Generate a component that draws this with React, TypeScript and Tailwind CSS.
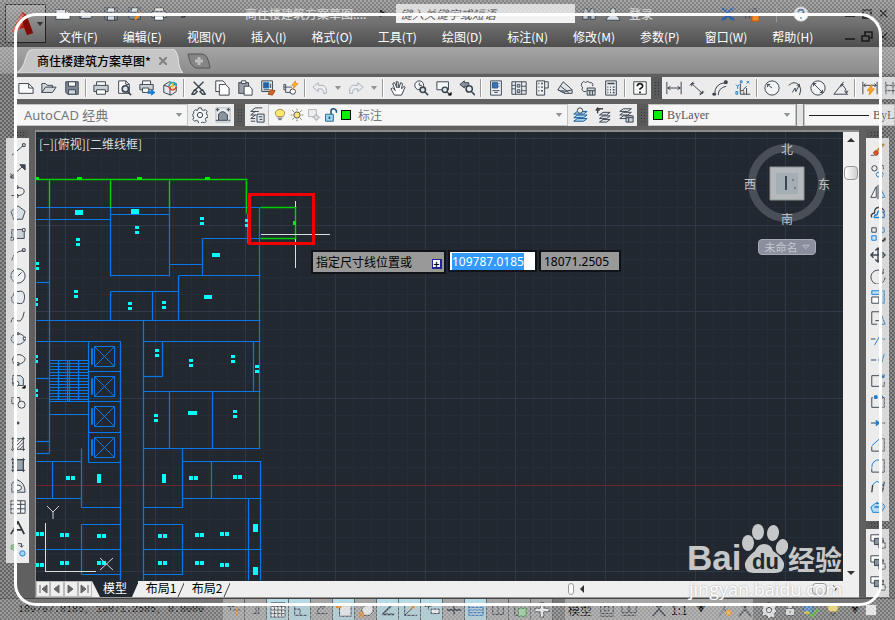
import { useEffect, useRef } from 'react';
import type { ReactNode } from 'react';

type Shape = { d: string; stroke?: string; fill?: string; width?: number };

const INK = '#3d4650';
const BLUE = '#1f7fd0';
const PALE = '#a9aeb4';
const ORANGE = '#f08a1c';

const icons: Record<string, Shape[]> = {
  newFile: [{ d: 'M1 4h11l5 5v6H1z', fill: '#fafbfc' }, { d: 'M12 4v5h5' }],
  open: [{ d: 'M1 14V4h4l2 2h6v3M1 14l4-6h12l-4 6z', fill: '#d4d8dc' }],
  save: [{ d: 'M2 2h14v14H4l-2-2z', fill: '#7b8896' }, { d: 'M5 2h8v5H5z', fill: '#f5f7f9' }, { d: 'M5 11h8v5H5z', fill: '#cfd6dc' }],
  saveAs: [{ d: 'M2 2h13v13H4l-2-2z', fill: '#7b8896' }, { d: 'M5 2h7v5H5z', fill: '#f5f7f9' }, { d: 'M9 15l7-8', stroke: ORANGE, width: 3 }],
  print: [{ d: 'M4 6V2h10v4', fill: '#fff' }, { d: 'M1 6h16v7H1z', fill: '#c9cfd5' }, { d: 'M4 11h10v5H4z', fill: '#fff' }],
  preview: [{ d: 'M3 1h8l4 4v10H3z', fill: '#fff' }, { d: 'M11 1v4h4' }, { d: 'M14 10a3.500 3.500 0 1 1-7 0a3.500 3.500 0 1 1 7 0M13 13l4 4', fill: '#dbe5ee', width: 1.8 }],
  publish: [{ d: 'M4 5V1h9v4', fill: '#fff' }, { d: 'M1 5h15v6H1z', fill: '#c9cfd5' }, { d: 'M4 9h7v5H4z', fill: '#fff' }, { d: 'M10 13h4v-2l4 3-4 3v-2h-4z', stroke: BLUE, fill: BLUE }],
  dwf: [{ d: 'M2 6l6-4 8 2v9l-6 4-8-3z', fill: '#e6eaee' }, { d: 'M2 6l7 2v9M9 8l7-4' }, { d: 'M16 7a4 4 0 1 1-8 0', stroke: '#e5402d', width: 2 }, { d: 'M8 7a4 4 0 0 1 8 0', stroke: '#19a6d8', width: 2 }, { d: 'M12 3v8M8 7h8', stroke: '#f4c73c' }],
  cut: [{ d: 'M3 2l10 10M14 2L4 12M1 16l3-5 3 2-3 3zM16 16l-3-5-3 2 3 3z', width: 1.6 }],
  copy: [{ d: 'M2 1h8l3 3v9H2z', fill: '#fff' }, { d: 'M6 5h7l4 4v8H6z', fill: '#fff' }],
  paste: [{ d: 'M2 3h11v12H2z', fill: '#9aa1a8' }, { d: 'M5 1h5v3H5z', fill: '#fff' }, { d: 'M8 7h6l3 3v7H8z', fill: '#fff' }],
  match: [{ d: 'M2 1h12v12H2z', fill: '#eef2f6' }, { d: 'M4 3h6v6H4z', stroke: BLUE, fill: '#2d5f97' }, { d: 'M4 11h7M12 4v5' }, { d: 'M9 16l3-5 5 1-3 5z', stroke: '#a8501a', fill: '#c9682a' }],
  blockEdit: [{ d: 'M1 8h9M1 5v6h2V5zM3 11v3h7', width: 1 }, { d: 'M14 13a3 3 0 1 1-6 0a3 3 0 1 1 6 0', fill: '#fff' }, { d: 'M14 1l-4 5h3l-2 4 6-6h-3z', stroke: ORANGE, fill: '#ffc13a' }],
  undo: [{ d: 'M1 8l6-5v3h5q5 1 4 9h-3q0-5-3-5H7v3z', stroke: PALE, fill: '#eceef0' }],
  redo: [{ d: 'M17 8l-6-5v3H6q-5 1-4 9h3q0-5 3-5h3v3z', stroke: PALE, fill: '#eceef0' }],
  hand: [{ d: 'M5 17l-4-7 2-1 3 3-3-8 2-1 3 6-1-7h2l1 7 2-6 2 1-1 6 3-3 1 1-4 9z', fill: '#fff' }],
  zoomTime: [{ d: 'M12 6a5 5 0 1 1-10 0a5 5 0 1 1 10 0M7 3v3h3', fill: '#f4f7fa' }, { d: 'M14 11a3 3 0 1 1-6 0a3 3 0 1 1 6 0M13 13l4 4', fill: '#dce6ee', width: 1.8 }],
  zoomWin: [{ d: 'M1 2h13v9H1z', fill: '#f4f7fa' }, { d: 'M13 11a3 3 0 1 1-6 0a3 3 0 1 1 6 0M12 13l3 3', fill: '#dce6ee', width: 1.6 }, { d: 'M17 14v3h-3z', stroke: '#111', fill: '#111' }],
  zoomPrev: [{ d: 'M1 5l5-4v2h5v4H6v2z', fill: '#8a949e' }, { d: 'M15 10a3.500 3.500 0 1 1-7 0a3.500 3.500 0 1 1 7 0M14 13l4 4', fill: '#e6edf3', width: 1.8 }],
  props: [{ d: 'M3 1h12v16H3z', fill: '#f4f7fa' }, { d: 'M5 3h6v6H5z', stroke: '#285b94', fill: '#3973b1' }, { d: 'M5 12h8M12 4h1M12 7h1M7 14h4' }],
  design: [{ d: 'M1 2h16v14H1z', fill: '#e9edf1' }, { d: 'M5 2v14M1 6h4M1 10h4M12 2v14M12 7h5M12 12h5M7 5h3v3H7zM7 11h3v3H7z', fill: '#bcc5cd', width: 1 }],
  palettes: [{ d: 'M3 1h9v16H3z', fill: '#eef1f4' }, { d: 'M12 2h4v7h-4' }, { d: 'M5 4h1M5 8h1M5 12h1M8 4h2M8 8h2M8 12h2', width: 1.6 }],
  sheets: [{ d: 'M1 11L7 2l10 9v4H9z', fill: '#dfe4e8' }, { d: 'M1 11l8 4M4 7l9 7M5 12q5 2 12-1', fill: '#aeb8c1' }],
  markup: [{ d: 'M2 4q2-4 4-1q3-3 5 0q5 0 3 4M2 4q-2 3 1 4q-2 3 1 5h3', fill: '#eef1f4' }, { d: 'M8 9h9v8H8zM8 12h9M11 12v5M14 12v5', fill: '#cfd7de' }],
  calc: [{ d: 'M3 1h12v16H3z', fill: '#e9edf0' }, { d: 'M5 4h8M5 8h1M8 8h1M11 8h2M5 11h1M8 11h1M11 11h2M5 14h1M8 14h1M11 14h2', width: 1.6 }],
  help: [{ d: 'M2 2h14v14H2z', fill: '#fff' }, { d: 'M6 7q0-3 3-3t3 3q0 1-3 3v1M9 13v2', stroke: '#222', width: 2 }],
  dimLinear: [{ d: 'M1 2v14M17 2v14M2 9h14M5 7L2 9l3 2M13 7l3 2-3 2' }],
  dimAligned: [{ d: 'M1 6l4-4M12 17l5-4M3 4l12 11M3 7V4h3M12 15h3v-3' }],
  dimArc: [{ d: 'M3 16Q3 4 15 3M7 17Q7 9 16 7' }, { d: 'M1 15h3v2H1zM14 1h3v3h-3z', fill: INK }],
  dimOrd: [{ d: 'M6 4v12h11M6 12h4M10 16v-3M9 11l4-4M13 9v7' }, { d: 'M1 5l2 2 2-2M3 7v3M13 1l3 3M16 1l-3 3M6 1h2v2H6zM1 13h2v3H1z', stroke: BLUE }],
  dimRad: [{ d: 'M17 9a8 8 0 1 1-16 0a8 8 0 1 1 16 0', fill: '#f3f5f7' }, { d: 'M9 9L4 5M4 8V5h3' }],
  dimJog: [{ d: 'M2 6q6-6 12 0q3 5 0 11M6 14l3-5 1 4 4-8M11 6l3-1v3' }],
  dimDia: [{ d: 'M17 9a8 8 0 1 1-16 0a8 8 0 1 1 16 0', fill: '#f3f5f7' }, { d: 'M4 4l10 10M4 7V4h3M11 14h3v-3' }],
  dimAng: [{ d: 'M1 16h16M1 16L12 2M9 5q6 3 6 10M9 8V5h3M13 12l2 3 2-3' }],
  dimQuick: [{ d: 'M1 2v14M17 2v14M2 6h14M4 4L2 6l2 2M14 4l2 2-2 2' }, { d: 'M11 5l-5 7h3l-1 5 6-7h-3z', stroke: ORANGE, fill: '#ffa629' }],
  dimBase: [{ d: 'M1 2v14M9 2v14M17 2v14M1 6h16M1 12h16' }],
  gear: [{ d: 'M7.500 1h3l.5 2 2 1 2-1 2 2-1 2 1 2 1 .5v2l-2 .5-1 2 1 2-2 2-2-1-2 1-.5 1h-2L7 16l-2-1-2 1-2-2 1-2-1-2v-2l1-1L2 5l2-2 2 1z', fill: '#f2f4f6' }, { d: 'M12 9a3 3 0 1 1-6 0a3 3 0 1 1 6 0' }],
  wsSave: [{ d: 'M1 1h16v16H1z', stroke: '#aab4bd', width: 1 }, { d: 'M4 15V8q5-6 10 1v6z', fill: '#8996a2' }, { d: 'M1 3h4M3 1v4M13 3h4M15 1v4M1 15h3M15 15h2' }],
  layerMgr: [{ d: 'M2 5l5-4h8M2 5h9M2 9l5-4M2 9h6M2 13l5-4M2 13h5M2 16h5' }, { d: 'M9 8h8v9H9zM11 11h4M12 14h3', fill: '#dce3e9' }],
  bulb: [{ d: 'M5 11q-4-5 0-8q4-3 8 0q4 3 0 8z', stroke: '#98843b', fill: '#ffe66d' }, { d: 'M6 13h6M7 15h4' }],
  sun: [{ d: 'M13 9a4 4 0 1 1-8 0a4 4 0 1 1 8 0', fill: '#ffe56a' }, { d: 'M9 1v2M9 15v2M1 9h2M15 9h2M3 3l2 2M13 13l2 2M3 15l2-2M13 5l2-2', stroke: '#77632b' }],
  frozen: [{ d: 'M2 2h10v9H2z', stroke: PALE, fill: '#eee' }, { d: 'M15 12a3 3 0 1 1-6 0a3 3 0 1 1 6 0M12 7v2M12 15v2M7 12h2M15 12h2', stroke: PALE, fill: '#ddd' }],
  unlock: [{ d: 'M2 8h10v9H2z', stroke: '#1f587c', fill: '#9bd5f4' }, { d: 'M9 8V4q0-3 3-3t4 3v2M7 11v3', stroke: '#1f587c', width: 2 }],
  layerCur: [{ d: 'M2 8l4-3h11l-4 3zM2 12l4-3h11l-4 3zM2 16l4-3h11l-4 3z', stroke: '#1c5c94', fill: '#a9d6f3' }, { d: 'M12 4a3 3 0 1 1-6 0a3 3 0 1 1 6 0', fill: '#eee' }],
  layerPrev: [{ d: 'M5 9l4-3h8l-4 3zM5 13l4-3h8l-4 3zM5 17l4-3h8l-4 3z', fill: '#dde2e6' }, { d: 'M3 7V2h6M1 4l2-3 2 3', width: 1.6 }],
  layerState: [{ d: 'M2 5l4-3h9l-4 3zM2 9l4-3h9l-4 3zM2 13l4-3h9l-4 3z', fill: '#e5e9ed' }, { d: 'M9 10h8v7H9zM9 12h8M12 12v5', fill: '#c7d0d8' }],
  line: [{ d: 'M2 15L15 4M14 2h3v3h-3z' }],
  xline: [{ d: 'M1 16L14 4' }, { d: 'M11 2h6v6zM1 12v5h5z', fill: INK }],
  pline: [{ d: 'M1 13h9q6-1 6-5t-8-4M6 12h3v3H6zM6 2h3v3H6z' }],
  polygon: [{ d: 'M9 1l8 6-3 9H4L1 7z', fill: '#d7dee5' }],
  rect: [{ d: 'M2 4h14v10H2z', fill: '#c9d1d9' }, { d: 'M14 3h3v3h-3zM1 13h3v3H1z', fill: '#fff' }],
  arc: [{ d: 'M2 15Q4 5 15 4M14 2h3v3h-3z' }],
  circle: [{ d: 'M17 9a8 8 0 1 1-16 0a8 8 0 1 1 16 0', fill: '#eef1f3' }, { d: 'M9 9l4-4' }],
  cloud: [{ d: 'M4 7Q4 1 9 3q6-2 7 3q1 4 0 6q-1 6-7 4q-7 1-7-4q-2-3 2-5z', fill: '#e5eaee' }],
  spline: [{ d: 'M1 14q2-8 5-4t6 2q3-3 4-10' }],
  ellipse: [{ d: 'M17 9q-2 6-8 6T1 9q2-6 8-6t8 6', fill: '#e5eaee' }, { d: 'M15 7h3v3h-3zM8 2h2v2H8z', fill: '#fff' }],
  ellArc: [{ d: 'M4 13Q1 9 4 5q8-5 13 2q0 6-9 7M7 12h3v3H7z' }],
  insert: [{ d: 'M3 3h9l3 3v8H3z', fill: '#dae1e7' }, { d: 'M10 12a3 3 0 1 1-6 0a3 3 0 1 1 6 0', fill: '#fff' }, { d: 'M17 14v3h-3z', stroke: '#111', fill: '#111' }],
  block: [{ d: 'M2 11V4h9v5M17 12a4 4 0 1 1-8 0a4 4 0 1 1 8 0M2 11h5' }],
  point: [{ d: 'M8 8h2v2H8z', fill: INK }],
  hatch: [{ d: 'M3 1v16M15 1v16M1 3h16M1 15h16' }, { d: 'M3 7l4-4M3 11l8-8M3 15L15 3M7 15l8-8M11 15l4-4', width: 1 }],
  gradient: [{ d: 'M3 3h12v12H3z', fill: '#9aa4ae' }, { d: 'M3 1v16M15 1v16M1 3h16M1 15h16' }],
  region: [{ d: 'M2 16V6l6-4q9 3 9 14z', fill: '#dde3e8' }, { d: 'M13 11a4 3 0 1 1-8 0a4 3 0 1 1 8 0', fill: '#fff' }],
  table: [{ d: 'M1 2h16v14H1z', fill: '#f4f6f8' }, { d: 'M1 6h16M1 11h16M6 2v14M12 2v14' }],
  mtext: [{ d: 'M1 16L9 2l7 14M5 11h8', stroke: '#30363c', width: 2 }],
  addSel: [{ d: 'M7 7a3 3 0 1 1-6 0a3 3 0 1 1 6 0', stroke: '#3a9c42', fill: '#7fd08a' }, { d: 'M17 14a3 3 0 1 1-6 0a3 3 0 1 1 6 0', stroke: BLUE, fill: '#a9d6f3' }, { d: 'M9 3h4v4M11 5l2 2 2-2' }],
  erase: [{ d: 'M1 15h4', width: 1 }, { d: 'M8 10l8-8', stroke: '#d08c35', width: 3 }, { d: 'M4 12q2-4 5-1q1 4-3 4z', stroke: '#a33514', fill: '#e2562a' }],
  copyObj: [{ d: 'M8 6a3 3 0 1 1-6 0a3 3 0 1 1 6 0' }, { d: 'M15 13a4 3 0 1 1-8 0a4 3 0 1 1 8 0', stroke: BLUE }, { d: 'M11 3h4v4' }],
  mirror: [{ d: 'M7 3v12H1z', fill: '#fff' }, { d: 'M9 1v16' }, { d: 'M11 3v12h6z', stroke: BLUE, fill: '#d0e9fb' }],
  offset: [{ d: 'M2 14q-2-4 3-5q0-7 6-6q5 1 5 6', width: 1.6 }, { d: 'M5 14q-1-3 3-3q0-5 4-4q5 0 4 7z', stroke: BLUE, width: 1.6 }],
  array: [{ d: 'M2 2h5v5H2z' }, { d: 'M11 2h5v5h-5zM2 11h5v5H2z', stroke: BLUE, fill: '#c8e6fa' }, { d: 'M17 13v4h-4z', fill: '#111' }],
  move: [{ d: 'M9 1v16M1 9h16M6 4l3-3 3 3M6 14l3 3 3-3M4 6L1 9l3 3M14 6l3 3-3 3', width: 1.6 }],
  rotate: [{ d: 'M15 5A8 8 0 1 0 17 10M15 1v5h-5' }],
  scale: [{ d: 'M2 6V2h14v14h-3V6z', stroke: BLUE, fill: '#bce0f8' }, { d: 'M2 9h8v7H2z', fill: '#fff' }],
  stretch: [{ d: 'M12 2H2v14h6M6 12h7M11 10l2 2-2 2' }, { d: 'M12 3l5 13h-5', stroke: BLUE }],
  trim: [{ d: 'M1 9h5' }, { d: 'M5 16L13 2M11 9h6', stroke: BLUE }],
  extend: [{ d: 'M1 9h6' }, { d: 'M9 9h3M12 16l4-14', stroke: BLUE }],
  breakAt: [{ d: 'M13 3H2v12h14v-5' }, { d: 'M13 2h3v3h-3z', stroke: BLUE, fill: BLUE }],
  breakObj: [{ d: 'M3 4H2v11h14V4h-2' }, { d: 'M5 2h3v3H5zM12 2h2v3h-2z', stroke: BLUE, fill: BLUE }],
  join: [{ d: 'M1 9h5M12 9h5' }, { d: 'M5 9h7M7 6l4 3-4 3z', stroke: BLUE, fill: BLUE }],
  chamfer: [{ d: 'M2 12v5h14V3h-4' }, { d: 'M2 11l10-9', stroke: BLUE }],
  fillet: [{ d: 'M2 13v4h14V3h-3' }, { d: 'M2 12Q2 3 12 3', stroke: BLUE }],
  blend: [{ d: 'M2 16l1-8M14 16l2-12', width: 1.6 }, { d: 'M3 8q5-7 8-2t4 0', stroke: BLUE }],
  explode: [{ d: 'M1 9l5-4h8l3 3-4 7H3z', stroke: BLUE, fill: '#b6dcf5' }, { d: 'M5 9h6v6M8 3v3M12 2l-1 4', stroke: BLUE, width: 1.6 }],
  order: [{ d: 'M1 2h10v7H1z', fill: '#fff' }, { d: 'M5 6h10v7H5z', fill: '#87919b' }, { d: 'M10 11h7v6h-7z', fill: '#fff' }],
  person: [{ d: 'M9 2q3 0 3 4t-3 4q-3 0-3-4t3-4zM1 16q1-5 6-6h4q5 1 6 6z', fill: '#d9dfe5' }],
  binoc: [{ d: 'M2 9l2-6h3l1 4h2l1-4h3l2 6v6h-5v-4H8v4H2z', fill: '#bcc5cf' }],
  exchange: [{ d: 'M2 3q4 0 7 6t7 6M16 3q-4 0-7 6t-7 6', stroke: '#2b5fad', width: 3 }],
  shop: [{ d: 'M2 14V8M6 14V3M10 8V3h4v5' }, { d: 'M9 9h8v8H9z', stroke: '#b8560c', fill: '#ef8b2a' }],
  helpRound: [{ d: 'M17 9a8 8 0 1 1-16 0a8 8 0 1 1 16 0', stroke: '#ddd', fill: '#f7f9fb' }, { d: 'M6 7q0-3 3-3t3 3q0 1-3 3M9 13v1', stroke: '#2d5f97', width: 2 }],
  snap: [{ d: 'M5 1v9M1 5h9M8 9h8' }, { d: 'M12 6v9', stroke: ORANGE, width: 2 }],
  square: [{ d: 'M12 3v10H5M9 6v7' }],
  grid: [{ d: 'M1 1h16v16H1zM1 5h16M1 9h16M1 13h16M5 1v16M9 1v16M13 1v16', width: 1, fill: '#fff' }],
  ortho: [{ d: 'M3 1v14h14M3 8h6v7' }],
  polar: [{ d: 'M2 13h13M4 13q0-9 8-8M9 3l3 2-3 3' }],
  osnap: [{ d: 'M4 4h13v12H4z', fill: '#f5f7f8' }, { d: 'M1 2h4v4H1z', stroke: ORANGE, width: 2 }],
  osnap3: [{ d: 'M4 8l4-4h9v7l-4 4H6z', fill: '#f5f7f8' }, { d: 'M6 14a2 2 0 1 1-4 0a2 2 0 1 1 4 0', stroke: ORANGE, width: 2 }],
  track: [{ d: 'M14 3L3 14h13', width: 2 }],
  ducs: [{ d: 'M3 2v13h14M3 15L14 5' }, { d: 'M10 8l6-6', stroke: ORANGE, width: 2 }],
  dyn: [{ d: 'M1 5h8M5 2v7M8 8h9v5H8z', fill: '#fff' }],
  weight: [{ d: 'M1 9h16M9 4v10', width: 2 }],
  transp: [{ d: 'M1 3h16v12H1zM1 6h16M1 9h16M1 12h16', stroke: '#2b73ba', fill: '#bbdaf2' }],
  quick: [{ d: 'M3 4h12v10H3zM9 4v10' }],
  select: [{ d: 'M3 1v14h10' }, { d: 'M7 7h9v9H7z', stroke: '#35883b', fill: '#a4d8a7' }],
  annoMon: [{ d: 'M7 1h4v6h6v4h-6v6H7v-6H1V7h6z', fill: '#fff' }],
  views: [{ d: 'M2 2h14v11H2zM1 16h16M6 5h5v5H6z' }],
  views2: [{ d: 'M1 3h7v9H1zM10 3h7v9h-7zM1 15h16' }],
  scaleMan: [{ d: 'M9 1v7M9 8L2 16M9 8l7 8M6 4l3 2 3-2', width: 2 }],
  anno: [{ d: 'M8 1v7l-6 8M8 8l3 3M4 4h8' }, { d: 'M16 12a3 3 0 1 1-6 0a3 3 0 1 1 6 0', stroke: ORANGE, fill: '#ffc13a' }],
  lockBar: [{ d: 'M3 7h12v9H3zM6 7V3h6v4M9 10v3', fill: '#eee' }],
  hardware: [{ d: 'M1 3h10v10H1z', stroke: '#2b5fad', fill: '#4b8ccc' }, { d: 'M6 12l4 4 7-8', stroke: '#59b72d', width: 3 }, { d: 'M1 12h6', stroke: '#e9c331', width: 3 }],
};

function Icon({ name, small = false }: { name: string; small?: boolean }) {
  return (
    <svg viewBox="0 0 18 18" className={small ? 'h-3.5 w-3.5 shrink-0' : 'h-4 w-4 shrink-0'} fill="none" strokeLinejoin="round">
      {icons[name].map((s, i) => (
        <path key={i} d={s.d} stroke={s.stroke ?? INK} fill={s.fill ?? 'none'} strokeWidth={s.width ?? 1.1} />
      ))}
    </svg>
  );
}

function Caret() {
  return (
    <svg viewBox="0 0 8 5" className="h-1 w-2 shrink-0">
      <path d="M0 0h8L4 5z" fill="#90959a" />
    </svg>
  );
}

function Grip() {
  return (
    <div className="flex w-[11px] shrink-0 items-center justify-center self-stretch bg-[#5a5a5a]">
      <div className="h-[15px] w-1.5 bg-[radial-gradient(#333_1px,transparent_1px)] bg-size-[3px_3px]" />
    </div>
  );
}

function ToolRow({ items }: { items: string[] }) {
  return (
    <div className="flex h-[22px] shrink-0 items-center bg-[#ececec]">
      {items.map((item, i) => {
        if (item === '|') return <div key={i} className="mx-0.5 h-[18px] w-0.5 border-r border-white bg-[#9a9a9a]" />;
        if (item === 'v')
          return (
            <button key={i} aria-label="history" className="flex w-[13px] items-center justify-center">
              <Caret />
            </button>
          );
        return (
          <button key={i} aria-label={item} className="flex h-full w-[23px] items-center justify-center">
            <Icon name={item} />
          </button>
        );
      })}
    </div>
  );
}

const menus = ['文件(F)', '编辑(E)', '视图(V)', '插入(I)', '格式(O)', '工具(T)', '绘图(D)', '标注(N)', '修改(M)', '参数(P)', '窗口(W)', '帮助(H)'];

const standardTools = [
  'newFile', 'open', 'save', '|', 'print', 'preview', 'publish', 'dwf', '|', 'cut', 'copy', 'paste', 'match', 'blockEdit', '|',
  'undo', 'v', 'redo', 'v', '|', 'hand', 'zoomTime', 'zoomWin', 'zoomPrev', '|',
  'props', 'design', 'palettes', 'sheets', 'markup', 'calc', '|', 'help',
];
const dimTools = ['dimLinear', 'dimAligned', 'dimArc', 'dimOrd', '|', 'dimRad', 'dimJog', 'dimDia', 'dimAng', '|', 'dimQuick', 'dimBase'];
const drawTools = [
  'line', 'xline', 'pline', 'polygon', 'rect', 'arc', 'circle', 'cloud', 'spline', 'ellipse', 'ellArc',
  'insert', 'block', 'point', 'hatch', 'gradient', 'region', 'table', 'mtext', 'addSel',
];
const modifyTools = [
  'erase', 'copyObj', 'mirror', 'offset', 'array', 'move', 'rotate', 'scale', 'stretch', 'trim', 'extend',
  'breakAt', 'breakObj', 'join', 'chamfer', 'fillet', 'blend', 'explode',
];

const statusToggles: [string, boolean][] = [
  ['snap', false], ['square', false], ['grid', true], ['ortho', true], ['polar', false], ['osnap', true], ['osnap3', false],
  ['track', true], ['ducs', true], ['dyn', true], ['weight', false], ['transp', true], ['quick', false], ['select', false], ['annoMon', false],
];

function TitleBar() {
  return (
    <header className="relative flex h-[47px] shrink-0 flex-col bg-linear-to-b from-[#8a8a8a] via-[#707070] to-[#4e4e4e] pl-[51px] text-white">
      <button aria-label="应用程序菜单" className="absolute top-1 left-[5px] flex h-[39px] w-[41px] items-center border border-[#222] bg-linear-to-b from-[#a3a3a3] to-[#6d6d6d] pl-1">
        <svg viewBox="0 0 26 26" className="h-[26px] w-[26px]">
          <path d="M2 20L12 1l4 2 7 19-6 2-3-7-6 1-2 5z" fill="#b3180d" />
          <path d="M2 20L12 1l1 11-7 11z" fill="#e2564a" />
          <path d="M13 12l4 12 6-2L16 3z" fill="#7d0c06" />
        </svg>
        <svg viewBox="0 0 8 5" className="h-1 w-2">
          <path d="M0 0h8L4 5z" fill="#333" />
        </svg>
      </button>
      <div className="flex h-[27px] items-center text-xs">
        {['newFile', 'open', 'save', 'saveAs', 'print'].map(n => (
          <button key={n} aria-label={n} className="flex w-6 justify-center">
            <Icon name={n} />
          </button>
        ))}
        <span className="w-6 text-center text-black">»</span>
        <span className="ml-[50px] w-[134px] truncate text-[#e4e4e4]">商住楼建筑方案草图....</span>
        <span className="w-[17px] text-[8px] text-black">▶</span>
        <input
          aria-label="搜索"
          placeholder="键入关键字或短语"
          className="h-[19px] w-[179px] bg-[#f2f2f2] px-1 text-xs italic placeholder:text-[#555]"
        />
        <div className="ml-1.5 flex items-center gap-2">
          <Icon name="binoc" />
          <Icon name="person" />
          <a href="#login" className="text-[#e4e4e4]">登录</a>
        </div>
        <div className="mr-[3px] ml-auto flex items-center gap-2">
          <Icon name="exchange" />
          <Icon name="shop" />
          <span className="mx-2 h-4 w-px bg-[#999]" />
          <Icon name="helpRound" />
          <div className="ml-6 flex items-center">
            <WindowButtons />
          </div>
        </div>
      </div>
      <nav className="flex h-5 items-center">
        <ul className="flex flex-1 justify-start gap-[25px] pl-2 text-xs leading-5 whitespace-nowrap">
          {menus.map(m => (
            <li key={m}>
              <a href="#menu">{m}</a>
            </li>
          ))}
        </ul>
        <div className="mr-[3px] flex">
          <WindowButtons restore />
        </div>
      </nav>
    </header>
  );
}

function WindowButtons({ restore = false }: { restore?: boolean }) {
  return (
    <>
      {['M1 8h10', restore ? 'M1 5h7v5H1zM4 5V1h7v6H8' : 'M2 2h8v8H2z', 'M2 2l7 7M9 2l-7 7'].map(d => (
        <button key={d} aria-label="窗口" className="flex w-[17px] justify-center">
          <svg viewBox="0 0 12 12" className="h-3 w-3" fill="none" stroke="#1b1b1b" strokeWidth="1.600">
            <path d={d} />
          </svg>
        </button>
      ))}
    </>
  );
}

function DocumentTabs() {
  return (
    <div className="flex h-[27px] shrink-0 items-end gap-1 border-b border-[#808080] bg-linear-to-b from-[#a4a4a4] to-[#8d8d8d] pl-[15px]">
      <div className="relative flex h-6 w-[168px] items-center pl-[22px]">
        <svg viewBox="0 0 168 23" preserveAspectRatio="none" className="absolute inset-0 h-full w-full">
          <path d="M0 23Q7 22 11 8Q13 0 20 0H156Q161 0 163 8Q164 20 168 23z" fill="#c6c6c6" stroke="#dedede" />
        </svg>
        <span className="relative text-xs font-medium whitespace-nowrap text-black">商住楼建筑方案草图*</span>
        <button aria-label="关闭" className="relative ml-auto pr-4">
          <svg viewBox="0 0 8 8" className="h-2 w-2" stroke="#808080" strokeWidth="2">
            <path d="M0 0l8 8M8 0L0 8" />
          </svg>
        </button>
      </div>
      <button aria-label="新建" className="mb-1">
        <svg viewBox="0 0 24 16" className="h-4 w-6">
          <path d="M1 1h14q6 0 8 14H9Q3 13 1 1z" fill="#858585" stroke="#555" />
          <path d="M12 4v8M8 8h8" stroke="#bdbdbd" strokeWidth="3" />
        </svg>
      </button>
    </div>
  );
}

function Combo({ children, className = '' }: { children?: ReactNode; className?: string }) {
  return (
    <button role="combobox" aria-expanded="false" className={`flex h-[22px] items-center border border-[#c4c4c4] bg-[#f6f6f6] px-1 text-left ${className}`}>
      {children}
    </button>
  );
}

function LayerBar() {
  return (
    <div className="flex h-[22px] shrink-0 items-center overflow-hidden bg-[#606060] pl-[15px] text-[#777]">
      <Combo className="w-[173px] shrink-0 justify-between">
        <span className="pl-1 font-['Noto_Sans','Noto_Sans_CJK_SC',sans-serif] text-[13px] leading-5">AutoCAD 经典</span>
        <Caret />
      </Combo>
      <ToolRow items={['gear', 'wsSave']} />
      <Grip />
      <ToolRow items={['layerMgr']} />
      <Combo className="w-[300px] shrink-0 justify-between">
        <span className="flex items-center gap-[3px]">
          {['bulb', 'sun', 'frozen', 'unlock'].map(n => (
            <Icon key={n} name={n} small />
          ))}
          <i className="mr-1 h-2.5 w-2.5 border border-black bg-[#00f000]" />
          <span className="text-xs leading-5">标注</span>
        </span>
        <Caret />
      </Combo>
      <ToolRow items={['layerCur', 'layerPrev', 'layerState']} />
      <Grip />
      <Combo className="w-[148px] shrink-0 justify-between">
        <span className="flex items-center gap-1">
          <i className="h-2.5 w-2.5 border border-black bg-[#00f000]" />
          <span className="font-['Liberation_Serif',serif] text-xs text-[#555]">ByLayer</span>
        </span>
        <Caret />
      </Combo>
      <div className="h-full w-2 shrink-0 border-x border-[#888] bg-[#e4e4e4]" />
      <Combo className="min-w-0 flex-1 gap-1">
        <span className="h-px w-[60px] shrink-0 bg-[#222]" />
        <span className="font-['Liberation_Serif',serif] text-xs text-[#555]">ByL</span>
      </Combo>
    </div>
  );
}

function HorizontalGrip() {
  return (
    <div className="flex h-2 items-center justify-center bg-[#5a5a5a]">
      <div className="h-1.5 w-[15px] bg-[radial-gradient(#333_1px,transparent_1px)] bg-size-[3px_3px]" />
    </div>
  );
}

function SideTools({ items }: { items: string[] }) {
  return (
    <div className="grid auto-rows-[21px] bg-[#ececec] pt-px pb-1">
      {items.map((n, i) => (
        <button key={i} aria-label={n} className="flex items-center justify-center">
          <Icon name={n} />
        </button>
      ))}
    </div>
  );
}

// [x1, y1, x2, y2] wall segments of the floor plan
const walls = [
  [36, 207, 260, 207], [36, 219, 110, 219], [49, 207, 49, 453], [110, 207, 110, 276], [110, 214, 169, 214], [110, 275, 169, 275],
  [169, 207, 169, 276], [169, 264, 202, 264], [202, 238, 202, 275], [202, 238, 260, 238], [178, 275, 260, 275], [178, 275, 178, 320],
  [110, 291, 178, 291], [110, 291, 110, 320], [152, 291, 152, 320], [36, 320, 260, 320], [259, 207, 259, 448], [247, 213, 247, 243],
  [36, 282, 49, 282], [36, 341, 120, 341], [120, 341, 120, 580], [88, 341, 88, 462], [143, 320, 143, 580], [143, 341, 260, 341],
  [253, 341, 253, 391], [162, 341, 162, 376], [143, 376, 162, 376], [143, 391, 260, 391], [169, 391, 169, 448], [212, 391, 212, 448],
  [143, 448, 260, 448], [182, 448, 182, 507], [182, 461, 261, 461], [211, 461, 211, 498], [182, 498, 261, 498], [260, 461, 260, 580],
  [248, 498, 248, 580], [143, 507, 182, 507], [143, 524, 182, 524], [182, 524, 182, 574], [36, 549, 120, 549], [143, 549, 261, 549],
  [143, 574, 182, 574], [36, 461, 81, 461], [52, 461, 52, 498], [36, 498, 81, 498], [81, 448, 81, 507], [81, 507, 120, 507],
  [81, 524, 120, 524], [81, 524, 81, 574], [81, 574, 120, 574], [36, 378, 49, 378], [36, 441, 49, 441], [36, 453, 49, 453],
  [49, 414, 88, 414], [49, 401, 120, 401], [88, 371, 120, 371], [88, 432, 120, 432], [88, 462, 120, 462], [58, 360, 58, 399],
  [67, 360, 67, 401], [69, 360, 69, 401], [78, 360, 78, 399],
];

const greenLines = [
  [36, 179, 247, 179], [49, 180, 49, 207], [110, 180, 110, 207], [169, 180, 169, 207], [246, 180, 246, 213],
  [260, 207, 296, 207], [260, 238, 296, 238], [295, 207, 295, 238],
];

// room labels: two stacked marks, two side by side, or one block
const stacked = [
  [137, 228], [78, 240], [76, 292], [130, 304], [164, 303], [157, 351], [37, 264], [36, 300], [36, 357], [202, 219],
  [233, 357], [191, 361], [257, 367], [235, 412], [156, 416], [36, 391], [247, 221],
];
const sideBySide = [
  [191, 478], [235, 477], [197, 535], [222, 534], [197, 563], [222, 565], [68, 478], [37, 534], [62, 535], [99, 536],
  [160, 536], [37, 565], [62, 563], [99, 563], [160, 563],
];
const blocks = [
  [75, 210, 8, 5], [131, 209, 8, 5], [212, 253, 8, 4], [204, 295, 8, 4], [188, 411, 9, 4], [97, 474, 4, 9], [162, 474, 4, 9],
  [253, 524, 5, 8], [253, 567, 5, 8],
];

function FloorPlan() {
  const steps = Array.from({ length: 14 }, (_, i) => 360 + i * 3);
  const lifts = [346, 376, 406, 437];
  return (
    <svg className="absolute inset-0 h-full w-full">
      <g transform="translate(-36 -132)" fill="none">
        {Array.from({ length: 160 }, (_, i) => 47 + i * 18).map((x, i) => (
          <path key={x} d={`M${x}.5 132v2000`} stroke={i % 5 === 1 ? '#303848' : '#262d38'} />
        ))}
        {Array.from({ length: 110 }, (_, i) => Math.round(138 + i * 17.33)).map((y, i) => (
          <path key={y} d={`M36 ${y}.5h3000`} stroke={i % 5 === 0 ? '#303848' : '#262d38'} />
        ))}
        <path d="M36 485.500h3000" stroke="#6b2730" />
        {walls.map(([x1, y1, x2, y2], i) => (
          <path key={i} d={`M${x1 + 0.5} ${y1 + 0.5}L${x2 + 0.5} ${y2 + 0.5}`} stroke="#0878e8" strokeWidth="1.200" />
        ))}
        {steps.map(y => (
          <path key={y} d={`M49 ${y}.5h39`} stroke="#0878e8" />
        ))}
        {lifts.map(y => (
          <g key={y} stroke="#0878e8">
            <path d={`M94.500 ${y}.5h20v20h-20zM91.500 ${y + 2}.5h1v16h-1z`} />
            <path d={`M95 ${y + 1}l19 19M114 ${y + 1}l-19 19`} />
          </g>
        ))}
        {greenLines.map(([x1, y1, x2, y2], i) => (
          <path key={i} d={`M${x1 + 0.5} ${y1 + 0.5}L${x2 + 0.5} ${y2 + 0.5}`} stroke="#00d000" strokeWidth="1.400" />
        ))}
        <path d="M36 177h3v3h-3zM77 177h5v3h-5zM137 177h5v3h-5zM205 177h5v3h-5zM293 221h3v4h-3z" fill="#0e0" />
        <g fill="#0ff">
          {stacked.map(([x, y], i) => (
            <path key={i} d={`M${x - 2} ${y - 2}h4v3h-4zM${x - 2} ${y + 3}h4v3h-4z`} />
          ))}
          {sideBySide.map(([x, y], i) => (
            <path key={i} d={`M${x - 2} ${y - 2}h4v4h-4zM${x + 3} ${y - 2}h4v4h-4z`} />
          ))}
          {blocks.map(([x, y, w, h], i) => (
            <rect key={i} x={x} y={y} width={w} height={h} />
          ))}
        </g>
        <path d="M295.500 201v6M295.500 239v29M261 234.500h69M45.500 523v48M45 571.500h51" stroke="#dcdcdc" />
        <path d="M47 506l6 6 6-6M53 512v7M100 558l13 12M113 558l-13 12" stroke="#d0d0d0" />
        <rect x="249.500" y="194.500" width="64" height="49" stroke="#f00000" strokeWidth="3" />
      </g>
    </svg>
  );
}

function ViewCube() {
  return (
    <div className="absolute top-[9px] right-[11px] flex w-[90px] flex-col items-center text-xs text-[#c2c5c8]">
      <svg viewBox="0 0 80 80" className="absolute top-[2px] left-[5px] h-20 w-20" fill="none">
        <circle cx="40" cy="40" r="35" stroke="#4a4f57" strokeWidth="8" />
        <path d="M23 24h34v33H23z" fill="#b5b9bb" stroke="#8d9193" />
        <path d="M29 30h22v21H29z" fill="#a3aeb5" />
        <path d="M39 33v14" stroke="#3d4650" strokeWidth="2" />
        <path d="M45 37h2M47 45h2" stroke="#4d565f" />
      </svg>
      <span className="relative leading-4">北</span>
      <div className="relative flex h-[54px] w-full items-center justify-between px-0.5">
        <span>西</span>
        <span>东</span>
      </div>
      <span className="relative leading-4">南</span>
      <button className="mt-3 flex h-4 w-[58px] items-center justify-center gap-1 rounded-sm border border-[#a6aab8] bg-[#8b8f9d] text-[11px] text-[#c4c7d1]">
        未命名
        <svg viewBox="0 0 9 6" className="h-1.5 w-2" fill="none" stroke="#c4c7d1">
          <path d="M1 1h7L4 5z" />
        </svg>
      </button>
    </div>
  );
}

function DynamicPrompt() {
  const xRef = useRef<HTMLInputElement>(null);

  useEffect(() => {
    xRef.current?.focus();
    xRef.current?.select();
  }, []);

  return (
    <div className="absolute top-[118px] left-[275px] flex items-start gap-0.5 text-xs text-black">
      <div className="flex h-6 w-[135px] items-center justify-between border-2 border-[#101318] bg-[#999] pl-[3px]">
        <label htmlFor="dim-x" className="leading-4">指定尺寸线位置或</label>
        <span className="mt-1 mr-[2px] flex h-2.5 w-2.5 items-center justify-center border border-r-2 border-b-2 border-[#22229a] bg-white text-[10px] leading-none font-bold">+</span>
      </div>
      <input
        id="dim-x"
        ref={xRef}
        defaultValue="109787.0185"
        className="h-[22px] w-[89px] border-2 border-[#101318] bg-white px-[2px] font-['Noto_Sans',sans-serif] leading-4 outline-none selection:bg-[#3399ff] selection:text-white"
      />
      <input
        aria-label="Y"
        defaultValue="18071.2505"
        className="h-[22px] w-[82px] border-2 border-[#101318] bg-[#999] px-[3px] font-['Noto_Sans',sans-serif] leading-4 outline-none"
      />
    </div>
  );
}

function ScrollArrow({ d }: { d: string }) {
  return (
    <button aria-label="滚动" className="flex h-4 w-4 shrink-0 items-center justify-center">
      <svg viewBox="0 0 8 8" className="h-2 w-2" fill="#333">
        <path d={d} />
      </svg>
    </button>
  );
}

function LayoutTabs() {
  return (
    <div className="flex h-[17px] shrink-0 items-stretch border-b border-[#999] bg-[#efefef] text-xs leading-[14px] text-black">
      {['M2 1v8M9 1v8L4 5z', 'M7 1v8L2 5z', 'M2 1v8l5-4z', 'M1 1v8l5-4zM8 1v8'].map(d => (
        <button key={d} aria-label="布局导航" className="flex w-3.5 items-center justify-center border border-[#bbb]">
          <svg viewBox="0 0 10 10" className="h-2.5 w-2.5" fill="#666" stroke="#666">
            <path d={d} />
          </svg>
        </button>
      ))}
      {['模型', '布局1', '布局2'].map((name, i) => (
        <button key={name} className="relative flex w-[46px] items-start justify-center">
          <svg viewBox="0 0 46 16" className="absolute inset-0 h-4 w-[46px]">
            {i === 0 && <path d="M0 0l8 16h32l7-16z" fill="#222830" />}
            {i > 0 && <path d="M40 16l7-16" stroke="#444" fill="none" />}
          </svg>
          <span className={i === 0 ? 'relative text-white' : 'relative'}>{name}</span>
        </button>
      ))}
      <div className="ml-auto flex w-[291px] items-center">
        <span className="h-3 w-1.5 rounded-sm border border-[#999] bg-white" />
        <ScrollArrow d="M6 0v8L2 4z" />
        <span className="ml-auto h-3 w-[15px] rounded-sm border border-[#999] bg-linear-to-b from-white to-[#d5d5d5]" />
        <ScrollArrow d="M2 0v8l4-4z" />
        <span className="w-4" />
      </div>
    </div>
  );
}

function Watermark() {
  return (
    <div className="pointer-events-none absolute right-3 -bottom-1 w-[160px] text-[#c6c7c9]">
      <div className="flex h-[52px] items-end">
        <span className="w-[54px] font-['Liberation_Sans',sans-serif] text-[35px] leading-[34px] font-bold">Bai</span>
        <svg viewBox="0 0 47 52" className="h-[52px] w-[47px] shrink-0" fill="#c6c7c9">
          <ellipse cx="7" cy="20" rx="6" ry="8" />
          <ellipse cx="17" cy="9" rx="6" ry="8" />
          <ellipse cx="32" cy="10" rx="6" ry="8" transform="rotate(8 32 10)" />
          <ellipse cx="41" cy="24" rx="6" ry="8" transform="rotate(15 41 24)" />
          <path d="M23 21q7 0 9 7q9 6 11 12q1 10-9 10H12Q3 49 4 40q2-6 10-12q3-7 9-7z" />
          <text x="11" y="46" fontSize="22" fontFamily="Liberation Sans" fontWeight="bold" fill="#222830">du</text>
        </svg>
        <span className="text-[27px] leading-[32px] font-bold whitespace-nowrap">经验</span>
      </div>
      <p className="h-[27px] pt-0.5 pl-0.5 font-['Open_Sans',sans-serif] text-lg leading-6 whitespace-nowrap text-white [text-shadow:0_0_2px_#999]">jingyan.baidu.com</p>
    </div>
  );
}

function StatusBar() {
  return (
    <footer className="flex h-[22px] shrink-0 items-center border-t border-[#444] bg-[#777] pl-[18px] text-black">
      <output className="w-[205px] font-['Liberation_Mono',monospace] text-[10px] whitespace-nowrap">109787.0185, 18071.2505, 0.0000</output>
      {statusToggles.map(([name, on]) => (
        <button
          key={name}
          aria-label={name}
          aria-pressed={on}
          className={`flex h-full w-[22px] shrink-0 items-center justify-center border-r border-[#666] ${on ? 'bg-[#b5dbe6]' : 'bg-[#a6a6a6]'}`}
        >
          <Icon name={name} />
        </button>
      ))}
      <div className="ml-3 flex h-full shrink-0 items-center gap-1.5 bg-[#a6a6a6] px-0.5 text-xs">
        <button className="w-[26px] whitespace-nowrap">模型</button>
        <Icon name="views" />
        <Icon name="views2" />
      </div>
      <div className="ml-auto flex h-full shrink-0 items-center gap-1 bg-[#a6a6a6] pl-3 text-xs">
        <Icon name="scaleMan" />
        <span className="w-[22px]">1:1</span>
        <span className="mr-2 text-[8px]">▼</span>
        <Icon name="anno" />
        <Icon name="scaleMan" />
      </div>
      <div className="ml-2 flex h-full w-[134px] shrink-0 items-center gap-1.5">
        <Icon name="gear" />
        <Icon name="lockBar" small />
        <Icon name="hardware" />
        <Icon name="bulb" />
        <span className="ml-1 text-[8px]">▼</span>
        <span className="h-3 w-3 shrink-0 border border-[#888] bg-white" />
      </div>
    </footer>
  );
}

function Frame() {
  return (
    <div className="pointer-events-none absolute inset-0">
      <svg className="h-full w-full">
        <defs>
          <pattern id="halftone" width="4" height="4" patternUnits="userSpaceOnUse">
            <path d="M0 0h2v2H0zM2 2h2v2H2z" fill="#c0c0c0" fillOpacity=".5" />
            <path d="M2 0h2v2H2zM0 2h2v2H0z" fill="#777" fillOpacity=".15" />
          </pattern>
          <mask id="outside">
            <rect width="100%" height="100%" fill="#fff" />
            <rect x="15" y="14" rx="22" className="h-[calc(100%-29px)] w-[calc(100%-29px)]" fill="#000" />
          </mask>
        </defs>
        <rect width="100%" height="100%" fill="url(#halftone)" mask="url(#outside)" />
      </svg>
      <div className="absolute top-[13px] right-[13px] bottom-[14px] left-[14px] rounded-[22px] border-3 border-white" />
    </div>
  );
}

export default function App() {
  return (
    <div className="relative flex min-h-screen flex-col overflow-hidden bg-[#606060] font-['Noto_Sans_CJK_SC',sans-serif]">
      <TitleBar />
      <DocumentTabs />
      <div className="mt-[3px] mb-[5px] flex h-[22px] shrink-0 overflow-hidden bg-[#606060] pl-3.5">
        <ToolRow items={standardTools} />
        <Grip />
        <ToolRow items={dimTools} />
      </div>
      <LayerBar />
      <div className="mt-1 flex min-h-[466px] flex-1">
        <aside className="mr-1.5 ml-1.5 w-[23px] shrink-0">
          <HorizontalGrip />
          <SideTools items={drawTools} />
        </aside>
        <main className="relative flex min-w-0 flex-1 flex-col border-t-2 border-l border-[#8c8c8c]">
          <div className="flex flex-1">
            <div className="relative flex-1 overflow-hidden bg-[#222830]">
              <FloorPlan />
              <p className="absolute top-1 left-[3px] text-xs text-[#dcdcdc]">[−][俯视][二维线框]</p>
              <ViewCube />
              <DynamicPrompt />
            </div>
            <div className="flex w-4 flex-col items-center bg-[#efefef]">
              <ScrollArrow d="M0 6h8L4 2z" />
              <span className="mt-[18px] h-3.5 w-3.5 rounded-sm border border-[#999] bg-linear-to-r from-white to-[#d0d0d0]" />
              <span className="flex-1" />
              <ScrollArrow d="M0 2h8L4 6z" />
            </div>
          </div>
          <LayoutTabs />
          <Watermark />
        </main>
        <aside className="mr-1.5 ml-[7px] w-[23px] shrink-0">
          <HorizontalGrip />
          <SideTools items={modifyTools} />
          <HorizontalGrip />
          <SideTools items={['order', 'order', 'order']} />
        </aside>
      </div>
      <StatusBar />
      <Frame />
    </div>
  );
}
